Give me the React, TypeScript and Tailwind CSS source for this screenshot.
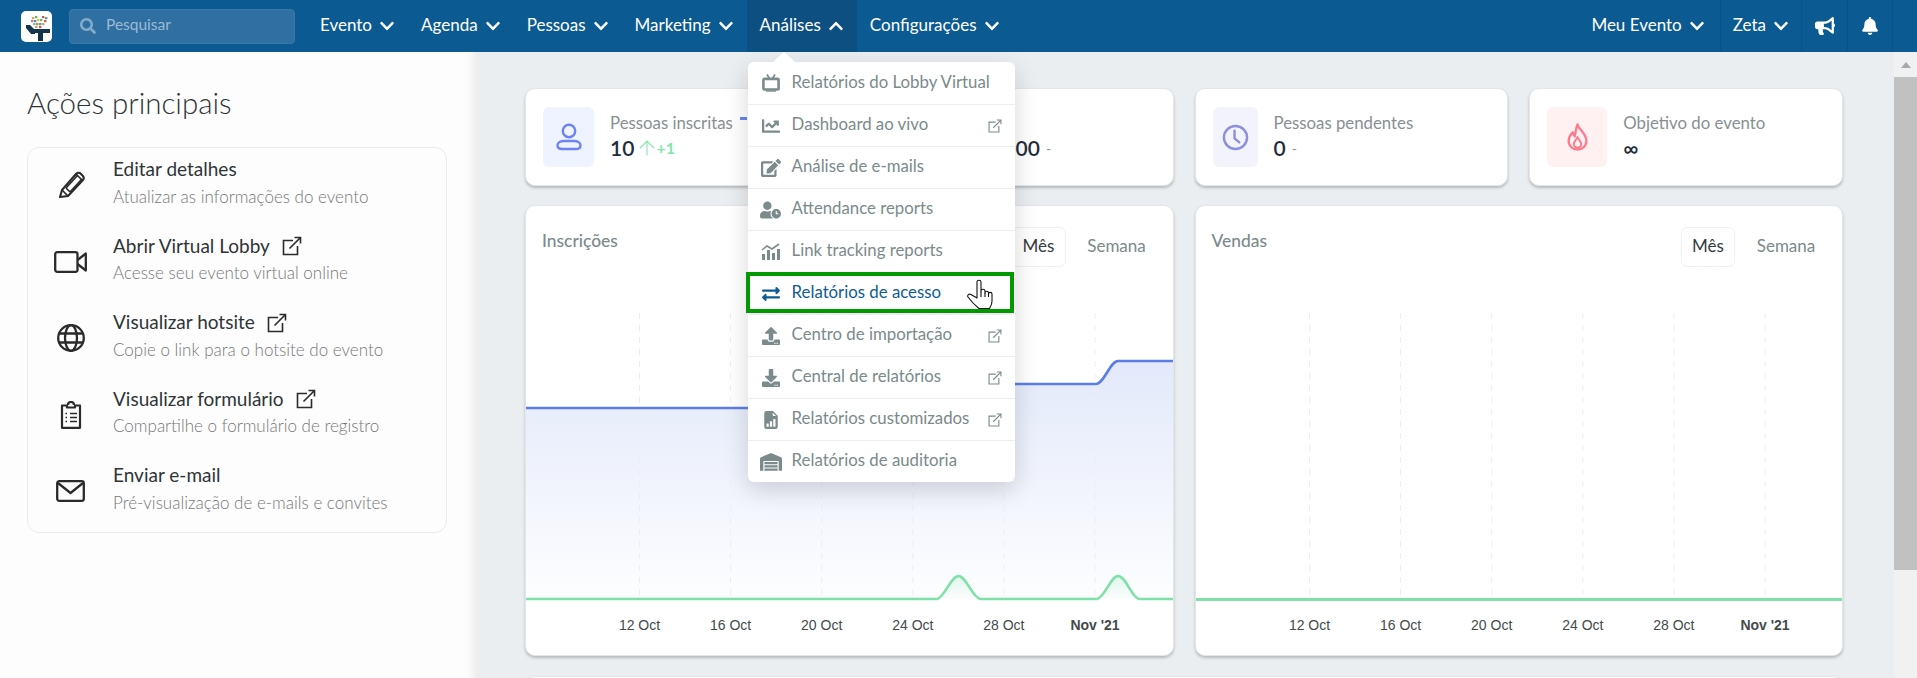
import React from "react";
import {
  FaBell,
  FaBullhorn,
  FaChartLine,
  FaChevronDown,
  FaChevronUp,
  FaDownload,
  FaEdit,
  FaExchangeAlt,
  FaSearch,
  FaUpload,
  FaUserClock,
  FaWarehouse,
} from "react-icons/fa";
import { BsFileEarmarkBarGraphFill } from "react-icons/bs";

function Logo() {
  const dots: [number, number, string][] = [
    [11, 6, "#e8a33d"], [14, 5, "#5fb878"], [21, 5, "#d9534f"], [24, 6, "#4aa3a2"],
    [10, 9, "#d96a8a"], [13, 9, "#3f8fc4"], [16, 8, "#e8c13d"], [19, 8, "#5fb878"], [23, 9, "#d9534f"],
    [12, 12, "#6fbf8f"], [15, 12, "#e07b39"], [18, 12, "#4aa3a2"], [21, 12, "#c9a36b"], [14, 15, "#c9a36b"], [18, 15, "#d9534f"],
  ];
  return (
    <div className="w-[31px] h-[31px] bg-white rounded-[5px] shrink-0">
      <svg viewBox="0 0 31 31" className="w-full h-full">
        {dots.map(([x, y, c], i) => (
          <rect key={i} x={x} y={y} width="2.4" height="2.2" fill={c} />
        ))}
        <path d="M5 14 L9 14 L14 19 L14 23 L10 23 L5 17 Z" fill="#12344d" />
        <path d="M13 18 H29 V22 H22 L22 30 H17 L17 22 H13 Z" fill="#12344d" />
      </svg>
    </div>
  );
}

function NavItem({ label, active }: { label: string; active?: boolean }) {
  return (
    <div className={`h-full flex items-center gap-[7px] px-[13px] ${active ? "bg-[#0d4f80]" : ""}`}>
      <span className="pb-[2px]">{label}</span>
      {active ? <FaChevronUp className="w-4 h-4" /> : <FaChevronDown className="w-4 h-4" />}
    </div>
  );
}

function ExtIcon({ className }: { className: string }) {
  return (
    <svg viewBox="0 0 20 20" className={className} fill="none" stroke="currentColor" strokeWidth="1.6">
      <path d="M11 4.5 H1.5 V18.5 H15.5 V10" />
      <path d="M7.5 12.5 L18 2 M12.5 1.5 H18.5 V7.5" />
    </svg>
  );
}

function TvIcon() {
  return (
    <svg viewBox="0 0 18 18" className="w-[18px] h-[18px]" fill="none" stroke="currentColor">
      <path d="M5 .5 L7.5 4.5 M13 .5 L10.5 4.5" strokeWidth="1.7" />
      <rect x="1.4" y="4.9" width="15.2" height="10.6" rx="1.2" strokeWidth="2.6" />
      <path d="M4 17 H14" strokeWidth="1.4" />
    </svg>
  );
}

function LinkTrackIcon() {
  return (
    <svg viewBox="0 0 20 18" className="w-5 h-[18px]" fill="currentColor">
      <path d="M1 7 L6 3 L11 6 L18 1" fill="none" stroke="currentColor" strokeWidth="1.6" />
      <rect x="1" y="11" width="3" height="6" />
      <rect x="6" y="7" width="3" height="10" />
      <rect x="11" y="10" width="3" height="7" />
      <rect x="16" y="6" width="3" height="11" />
    </svg>
  );
}

const menuItems = [
  { label: "Relatórios do Lobby Virtual", icon: <TvIcon /> },
  { label: "Dashboard ao vivo", icon: <FaChartLine className="w-[18px] h-[18px]" />, ext: true },
  { label: "Análise de e-mails", icon: <FaEdit className="w-5 h-[18px]" /> },
  { label: "Attendance reports", icon: <FaUserClock className="w-[21px] h-[18px]" /> },
  { label: "Link tracking reports", icon: <LinkTrackIcon /> },
  { label: "Relatórios de acesso", icon: <FaExchangeAlt className="w-[18px] h-[18px]" />, active: true },
  { label: "Centro de importação", icon: <FaUpload className="w-[18px] h-[18px]" />, ext: true },
  { label: "Central de relatórios", icon: <FaDownload className="w-[18px] h-[18px]" />, ext: true },
  { label: "Relatórios customizados", icon: <BsFileEarmarkBarGraphFill className="w-[18px] h-[18px]" />, ext: true },
  { label: "Relatórios de auditoria", icon: <FaWarehouse className="w-[22px] h-[18px]" /> },
];

function HandCursor() {
  return (
    <svg viewBox="0 0 26 30" className="w-[26px] h-[30px]" fill="#fff" stroke="#111" strokeWidth="1.1" strokeLinejoin="round">
      <path d="M10 19 V3 C10 .6 14 .6 14 3 V12 C14 9.6 18 9.6 18 12 V14 C18 11.6 21.5 11.6 21.5 14 V15 C21.5 12.8 25 12.8 25 15 V22 C25 26 23.5 27.5 22.5 29.5 H12 C9 27 5 23.5 1 18 C0 16 2 14.5 4 15.5 Z" />
      <path d="M14 12 V18 M18 14 V18 M21.5 15 V18" fill="none" />
    </svg>
  );
}

function AnalyticsMenu() {
  return (
    <div className="absolute left-px top-[62px] w-[267px] bg-white rounded-[6px] shadow-[0_8px_24px_rgba(0,0,0,0.16)] text-[#7b8a8b] text-[16.8px] font-normal">
      <div className="absolute left-[25px] -top-[10px] w-0 h-0 border-x-[11px] border-x-transparent border-b-[10px] border-b-white" />
      {menuItems.map((item, i) => (
        <div
          key={item.label}
          className={`relative h-[42px] flex items-center ${i > 0 ? "border-t border-[#eceeef]" : ""} ${item.active ? "text-[#0f5c94]" : ""}`}
        >
          <div className="w-[28px] ml-[9px] flex justify-center shrink-0">{item.icon}</div>
          <span className={`ml-[7px] whitespace-nowrap ${i > 0 ? "pb-[3px]" : "pb-[2px]"}`}>{item.label}</span>
          {item.ext && <ExtIcon className="absolute right-[13px] w-[14px] h-[14px]" />}
          {item.active && (
            <>
              <div className="absolute -left-[2px] -top-px w-[268px] h-[41px] border-[4px] border-[#009900]" />
              <div className="absolute left-[219px] top-[6px]">
                <HandCursor />
              </div>
            </>
          )}
        </div>
      ))}
    </div>
  );
}

function TopBar() {
  return (
    <header className="relative z-20 h-[52px] shrink-0 flex items-center bg-[#0c5a92] text-white text-[17px] pl-[21px]">
      <Logo />
      <div className="ml-[17px] w-[226px] h-[35px] rounded-[4px] bg-[#2f6fa1] border border-[#3a78a8] flex items-center pl-[10px] shrink-0 mr-3">
        <FaSearch className="w-[16px] h-[16px] text-[#84abc8]" />
        <span className="ml-[10px] pb-[2px] text-[#9dbbd2] text-[15.5px]">Pesquisar</span>
      </div>
      <div className="h-full flex items-center">
        <NavItem label="Evento" />
        <NavItem label="Agenda" />
        <NavItem label="Pessoas" />
        <NavItem label="Marketing" />
        <div className="relative h-full">
          <NavItem label="Análises" active />
          <AnalyticsMenu />
        </div>
        <NavItem label="Configurações" />
      </div>
      <div className="ml-auto h-full flex items-center mr-[24px]">
        <div className="h-full flex items-center gap-[7px] pr-[15px]">
          <span className="pb-[2px]">Meu Evento</span>
          <FaChevronDown className="w-4 h-4" />
        </div>
        <div className="h-full flex items-center gap-[7px] px-[12px] border-l border-[#0e5284]">
          <span className="pb-[2px]">Zeta</span>
          <FaChevronDown className="w-4 h-4" />
        </div>
        <div className="h-full w-[46px] flex items-center justify-center border-l border-[#0e5284]">
          <FaBullhorn className="w-5 h-[18px]" />
        </div>
        <div className="h-full w-[46px] flex items-center justify-center border-x border-[#0e5284]">
          <FaBell className="w-4 h-[18px]" />
        </div>
      </div>
    </header>
  );
}

function PencilIcon() {
  return (
    <svg viewBox="0 0 28 30" className="w-[30px] h-[30px]" fill="none" stroke="#2b2b2b" strokeWidth="2.1" strokeLinejoin="round">
      <path d="M3 27 L5 20 L19 4 C20.5 2.5 22.5 2.5 24 4 L25.5 5.5 C27 7 27 9 25.5 10.5 L11 26 Z" />
      <path d="M5 20 L11 26 M9 18 L20 6 M13 22 L24 10 M9 18 L13 22 M19 4 L25.5 10.5" strokeWidth="1.7" />
    </svg>
  );
}

function VideoIcon() {
  return (
    <svg viewBox="0 0 33 22" className="w-[33px] h-[22px]" fill="none" stroke="#2b2b2b" strokeWidth="2.3" strokeLinejoin="round">
      <rect x="1.2" y="1.2" width="22.3" height="19.6" rx="2" />
      <path d="M23.5 9 L31.8 2.5 V19.5 L23.5 13" />
    </svg>
  );
}

function GlobeIcon() {
  return (
    <svg viewBox="0 0 28 28" className="w-[28px] h-[28px]" fill="none" stroke="#2b2b2b" strokeWidth="2.3">
      <circle cx="14" cy="14" r="12.8" />
      <ellipse cx="14" cy="14" rx="6" ry="12.8" />
      <path d="M2.5 9.5 H25.5 M2.5 18.5 H25.5" />
    </svg>
  );
}

function ClipboardIcon() {
  return (
    <svg viewBox="0 0 22 28" className="w-[22px] h-[28px]" fill="none" stroke="#2b2b2b" strokeWidth="2.2" strokeLinejoin="round">
      <path d="M7 4.5 H2 V26.8 H20 V4.5 H15 V6.5 H7 Z" />
      <path d="M8 4 A3 3 0 0 1 14 4" />
      <path d="M5.5 12.5 H7 M10 12.5 H17 M5.5 16.5 H7 M10 16.5 H17 M5.5 20.5 H7 M10 20.5 H17" strokeWidth="1.7" />
    </svg>
  );
}

function MailIcon() {
  return (
    <svg viewBox="0 0 29 22" className="w-[29px] h-[22px]" fill="none" stroke="#2b2b2b" strokeWidth="2.3" strokeLinejoin="round">
      <rect x="1.2" y="1.2" width="26.6" height="19.6" rx="2" />
      <path d="M2 3 L14.5 13 L27 3" />
    </svg>
  );
}

const actions = [
  { title: "Editar detalhes", sub: "Atualizar as informações do evento", icon: <PencilIcon /> },
  { title: "Abrir Virtual Lobby", sub: "Acesse seu evento virtual online", icon: <VideoIcon />, ext: true },
  { title: "Visualizar hotsite", sub: "Copie o link para o hotsite do evento", icon: <GlobeIcon />, ext: true },
  { title: "Visualizar formulário", sub: "Compartilhe o formulário de registro", icon: <ClipboardIcon />, ext: true },
  { title: "Enviar e-mail", sub: "Pré-visualização de e-mails e convites", icon: <MailIcon /> },
];

function Sidebar() {
  return (
    <aside className="w-[477px] shrink-0 bg-[#fdfdfd] shadow-[inset_-12px_0_12px_-10px_rgba(0,0,0,0.1)] pt-[32px] pl-[27px]">
      <h1 className="text-[29.5px] leading-[38px] font-light text-[#2f3437]">Ações principais</h1>
      <div className="mt-[25px] w-[420px] h-[386px] border border-[#e8eaec] rounded-[12px] pt-[5px] flex flex-col">
        {actions.map((a) => (
          <div key={a.title} className="h-[76.5px] flex shrink-0">
            <div className="w-[85px] h-[64px] flex items-center justify-center shrink-0">{a.icon}</div>
            <div className="pt-[3px]">
              <div className="flex items-center h-[27px] text-[19px] text-[#2f3437]">
                <span>{a.title}</span>
                {a.ext && <ExtIcon className="ml-[12px] w-[20px] h-[20px] text-[#2b2b2b]" />}
              </div>
              <div className="mt-[1px] h-[25px] flex items-center text-[17px] font-light text-[#777]">{a.sub}</div>
            </div>
          </div>
        ))}
      </div>
    </aside>
  );
}

function UserIcon() {
  return (
    <svg viewBox="0 0 26 28" className="w-[26px] h-[28px]" fill="none" stroke="#6b83f5" strokeWidth="2.4">
      <circle cx="13" cy="8" r="6.2" />
      <path d="M6 26 C3 26 1.5 24.5 1.5 22.5 C1.5 19.5 5 18 8 18 H18 C21 18 24.5 19.5 24.5 22.5 C24.5 24.5 23 26 20 26 Z" />
    </svg>
  );
}

function ClockIcon() {
  return (
    <svg viewBox="0 0 28 28" className="w-[27px] h-[27px]" fill="none" stroke="#8c8fdc" strokeWidth="2.5" strokeLinecap="round">
      <circle cx="14" cy="14" r="12" />
      <path d="M13 7 V15 L18 19" />
    </svg>
  );
}

function FlameIcon() {
  return (
    <svg viewBox="0 0 22 30" className="w-[21px] h-[28px]" fill="none" stroke="#ff7a8a" strokeWidth="2.5" strokeLinejoin="round">
      <path d="M11 1.5 C12 7 20.5 11 20.5 19 C20.5 25 16 28.5 11 28.5 C6 28.5 1.5 25 1.5 19 C1.5 15 4 12 6 10 C6.5 12 7 13.5 8 14.5 C9 11 9 6 11 1.5 Z" />
      <path d="M11 15 C12 18 15 19.5 15 22.5 C15 25 13 26.5 11 26.5 C9 26.5 7 25 7 22.5 C7 19.5 10 18 11 15 Z" strokeWidth="2" />
    </svg>
  );
}

function StatCard({
  boxClass,
  icon,
  label,
  value,
  trend,
  children,
}: {
  boxClass: string;
  icon: React.ReactNode;
  label: string;
  value: string;
  trend?: React.ReactNode;
  children?: React.ReactNode;
}) {
  return (
    <div className="relative h-[98px] bg-white rounded-[10px] border border-[#e4e7e9] shadow-[0_2px_3px_rgba(0,0,0,0.22)] pl-[17px] pt-[18px] flex">
      <div className={`h-[60px] rounded-[6px] flex items-center justify-center shrink-0 ${boxClass}`}>{icon}</div>
      <div className="ml-[16px]">
        <div className="h-[24px] mt-[4px] flex items-center text-[16.8px] text-[#888f93] whitespace-nowrap">{label}</div>
        <div className="h-[26px] flex items-center whitespace-nowrap">
          <span className="text-[21px] font-semibold text-[#1f2d3d]">{value}</span>
          {trend ?? <span className="ml-[6px] text-[14px] text-[#8a9499]">-</span>}
        </div>
      </div>
      {children}
    </div>
  );
}

const xLabels = ["12 Oct", "16 Oct", "20 Oct", "24 Oct", "28 Oct", "Nov '21"];

function ChartCard({ title, withData }: { title: string; withData?: boolean }) {
  const gradId = `fill-${title}`;
  return (
    <div className="h-[451px] bg-white rounded-[10px] border border-[#e4e7e9] shadow-[0_2px_3px_rgba(0,0,0,0.22)] overflow-hidden flex flex-col">
      <div className="h-[62px] shrink-0 flex items-start justify-between pt-[21px] pl-[16px] pr-[17px]">
        <span className="mt-[1px] text-[17.4px] font-medium text-[#7b8a8b]">{title}</span>
        <div className="flex items-center gap-[12px] text-[17px]">
          <span className="h-[40px] w-[54px] pb-[2px] flex items-center justify-center rounded-[6px] border border-[#eff0f1] text-[#343a40]">Mês</span>
          <span className="h-[40px] w-[78px] pb-[2px] flex items-center justify-center text-[#7b8a8b]">Semana</span>
        </div>
      </div>
      <svg viewBox="0 0 648 356" className="mt-[32px] w-[648px] h-[356px] shrink-0">
        <defs>
          <linearGradient id={gradId} x1="0" y1="61" x2="0" y2="299" gradientUnits="userSpaceOnUse">
            <stop offset="0" stopColor="#5b7ee5" stopOpacity="0.17" />
            <stop offset="1" stopColor="#5b7ee5" stopOpacity="0.01" />
          </linearGradient>
          <linearGradient id={`${gradId}-g`} x1="0" y1="276" x2="0" y2="299" gradientUnits="userSpaceOnUse">
            <stop offset="0" stopColor="#7ee2a8" stopOpacity="0.2" />
            <stop offset="1" stopColor="#7ee2a8" stopOpacity="0.02" />
          </linearGradient>
        </defs>
        {withData && (
          <path
            d="M0 108 H459 C467 108 474 84 481 84 H570 C578 84 584 61 592 61 H648 V299 H0 Z"
            fill={`url(#${gradId})`}
          />
        )}
        {xLabels.map((l, i) => (
          <g key={l}>
            <line x1={113.5 + 91.1 * i} x2={113.5 + 91.1 * i} y1="13" y2="297" stroke="#eeeeee" strokeDasharray="6 6" />
            <text
              x={113.5 + 91.1 * i}
              y="330"
              textAnchor="middle"
              className={`font-[family-name:'Liberation_Sans',sans-serif] text-[14px] ${i === 5 ? "font-bold" : ""}`}
              fill="#444a4c"
            >
              {l}
            </text>
          </g>
        ))}
        {withData && (
          <>
            <path d="M0 108 H459 C467 108 474 84 481 84 H570 C578 84 584 61 592 61 H648" fill="none" stroke="#5b7ee5" strokeWidth="2.6" />
            <path d="M411 299 C419 297 425 276 432.5 276 C440 276 446 297 454 299 Z M571 299 C579 297 585 276 592 276 C600 276 605 297 613 299 Z" fill={`url(#${gradId}-g)`} />
            <path d="M0 299 H411 C419 297 425 276 432.5 276 C440 276 446 297 454 299 H571 C579 297 585 276 592 276 C600 276 605 297 613 299 H648" fill="none" stroke="#7ee2a8" strokeWidth="2.6" />
          </>
        )}
        {!withData && <path d="M0 299.5 H648" stroke="#7ee2a8" strokeWidth="2.8" />}
      </svg>
    </div>
  );
}

function Scrollbar() {
  return (
    <div className="w-[23px] shrink-0 bg-[#f1f1f1] flex flex-col">
      <div className="h-[25px] bg-[#eff1f2] flex items-center justify-center">
        <div className="w-0 h-0 border-x-[5px] border-x-transparent border-b-[6px] border-b-[#a8a8a8]" />
      </div>
      <div className="h-[493px] bg-[#c1c1c1]" />
    </div>
  );
}

export default function App() {
  return (
    <div className="w-[1917px] h-[678px] overflow-hidden flex flex-col font-[family-name:Lato,sans-serif]">
      <TopBar />
      <div className="flex-1 flex min-h-0">
        <Sidebar />
        <main className="flex-1 min-w-0 bg-[#ebeef0] pt-[36px] pl-[48px] pr-[51px] overflow-hidden">
          <div className="grid grid-cols-4 gap-x-[21px]">
            <StatCard
              boxClass="w-[51px] bg-[#eff2ff]"
              icon={<UserIcon />}
              label="Pessoas inscritas"
              value="10"
              trend={
                <span className="ml-[5px] flex items-center gap-px text-[16px] font-bold text-[#84e4ac]">
                  <svg viewBox="0 0 16 16" className="w-4 h-4" fill="none" stroke="currentColor" strokeWidth="1.1">
                    <path d="M8 15.5 V1 M1 8 L8 1 L15 8" />
                  </svg>
                  +1
                </span>
              }
            >
              <div className="absolute left-[214px] top-[28px] w-[7px] h-[3px] bg-[#6b83f5]" />
            </StatCard>
            <StatCard boxClass="w-[74px] bg-[#eef9f2]" icon={null} label="Total" value="R$ 0,00" />
            <StatCard boxClass="w-[45px] bg-[#f3f3fb]" icon={<ClockIcon />} label="Pessoas pendentes" value="0" />
            <StatCard boxClass="w-[60px] bg-[#fff0f1]" icon={<FlameIcon />} label="Objetivo do evento" value="∞" trend={<span />} />
          </div>
          <div className="mt-[19px] grid grid-cols-2 gap-x-[21px]">
            <ChartCard title="Inscrições" withData />
            <ChartCard title="Vendas" />
          </div>
          <div className="mt-[20px] h-[40px] bg-white rounded-[10px] border border-[#e4e7e9]" />
        </main>
        <Scrollbar />
      </div>
    </div>
  );
}
